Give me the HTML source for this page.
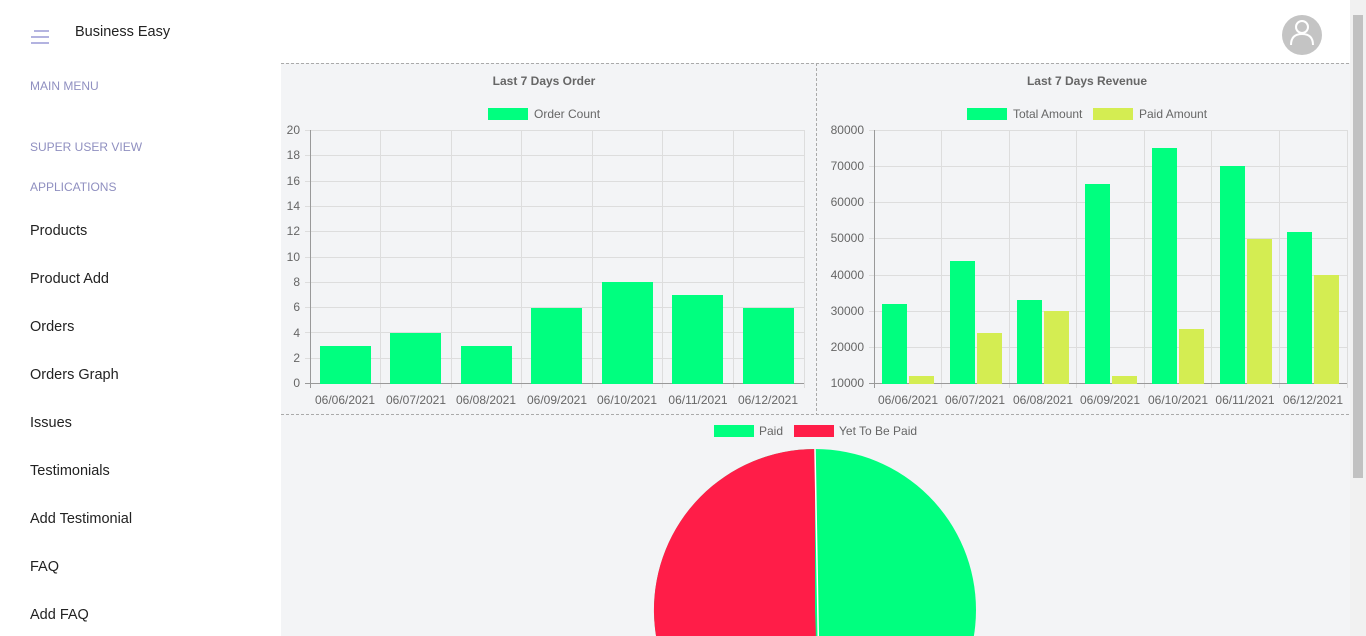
<!DOCTYPE html><html><head><style>
html,body{margin:0;width:1366px;height:636px;overflow:hidden}
body{font-family:"Liberation Sans",sans-serif;background:#fff;position:relative}
.hdr{position:absolute;left:0;top:0;width:1350px;height:63px;background:#fff}
.side{position:absolute;left:0;top:63px;width:281px;height:573px;background:#fff}
.h{position:absolute;left:30px;font-size:12px;color:#8f8fc0}
.i{position:absolute;left:30px;font-size:14.5px;color:#222}
.main{position:absolute;left:281px;top:63px;width:1069px;height:573px;background:#f3f4f6}
.sb{position:absolute;left:1350px;top:0;width:16px;height:636px;background:#f1f1f1}
</style></head><body>
<div class="hdr">
<svg style="position:absolute;left:30px;top:30px" width="20" height="16"><g stroke="#9a9ad6" stroke-width="1.5"><line x1="4" y1="1" x2="19" y2="1"/><line x1="1" y1="7" x2="19" y2="7"/><line x1="1" y1="13" x2="19" y2="13"/></g></svg>
<div style="position:absolute;left:75px;top:24px;font-size:14.5px;color:#222">Business Easy</div>
<svg style="position:absolute;left:1282px;top:15px" width="40" height="40"><circle cx="20" cy="20" r="20" fill="#c4c4c4"/><circle cx="20" cy="12" r="6" fill="none" stroke="#fff" stroke-width="2"/><path d="M9 30 Q9 19 20 19 Q31 19 31 30" fill="none" stroke="#fff" stroke-width="2"/></svg>
</div>
<div class="side">
<div class="h" style="top:16px">MAIN MENU</div>
<div class="h" style="top:77px">SUPER USER VIEW</div>
<div class="h" style="top:117px">APPLICATIONS</div>
<div class="i" style="top:160px">Products</div>
<div class="i" style="top:208px">Product Add</div>
<div class="i" style="top:256px">Orders</div>
<div class="i" style="top:304px">Orders Graph</div>
<div class="i" style="top:352px">Issues</div>
<div class="i" style="top:400px">Testimonials</div>
<div class="i" style="top:448px">Add Testimonial</div>
<div class="i" style="top:496px">FAQ</div>
<div class="i" style="top:544px">Add FAQ</div>
</div>
<div class="main"></div>
<svg style="position:absolute;left:0;top:0;overflow:hidden" width="1350" height="636" font-family="Liberation Sans, sans-serif" font-size="12" fill="#666">
<g stroke="#aaa" stroke-dasharray="3,2"><line x1="281" y1="63.5" x2="1350" y2="63.5"/><line x1="816.5" y1="63" x2="816.5" y2="414"/><line x1="281" y1="414.5" x2="1350" y2="414.5"/></g>
<text x="544" y="85" text-anchor="middle" font-weight="bold">Last 7 Days Order</text>
<rect x="488" y="108" width="40" height="12" fill="#00ff7f"/><text x="534" y="118">Order Count</text>
<g stroke="#ddd"><line x1="305" y1="130.5" x2="804" y2="130.5"/><line x1="305" y1="155.5" x2="804" y2="155.5"/><line x1="305" y1="181.5" x2="804" y2="181.5"/><line x1="305" y1="206.5" x2="804" y2="206.5"/><line x1="305" y1="231.5" x2="804" y2="231.5"/><line x1="305" y1="257.5" x2="804" y2="257.5"/><line x1="305" y1="282.5" x2="804" y2="282.5"/><line x1="305" y1="307.5" x2="804" y2="307.5"/><line x1="305" y1="332.5" x2="804" y2="332.5"/><line x1="305" y1="358.5" x2="804" y2="358.5"/>
<line x1="380.5" y1="130" x2="380.5" y2="388"/><line x1="451.5" y1="130" x2="451.5" y2="388"/><line x1="521.5" y1="130" x2="521.5" y2="388"/><line x1="592.5" y1="130" x2="592.5" y2="388"/><line x1="662.5" y1="130" x2="662.5" y2="388"/><line x1="733.5" y1="130" x2="733.5" y2="388"/><line x1="804.5" y1="130" x2="804.5" y2="388"/></g>
<g stroke="#999"><line x1="310.5" y1="130" x2="310.5" y2="388"/><line x1="305" y1="383.5" x2="804" y2="383.5"/></g>
<g text-anchor="end"><text x="300" y="134">20</text><text x="300" y="159">18</text><text x="300" y="185">16</text><text x="300" y="210">14</text><text x="300" y="235">12</text><text x="300" y="261">10</text><text x="300" y="286">8</text><text x="300" y="311">6</text><text x="300" y="337">4</text><text x="300" y="362">2</text><text x="300" y="387">0</text></g>
<g fill="#00ff7f"><rect x="320" y="346" width="51" height="38"/><rect x="390" y="333" width="51" height="51"/><rect x="461" y="346" width="51" height="38"/><rect x="531" y="308" width="51" height="76"/><rect x="602" y="282" width="51" height="102"/><rect x="672" y="295" width="51" height="89"/><rect x="743" y="308" width="51" height="76"/></g>
<g text-anchor="middle"><text x="345" y="404">06/06/2021</text><text x="416" y="404">06/07/2021</text><text x="486" y="404">06/08/2021</text><text x="557" y="404">06/09/2021</text><text x="627" y="404">06/10/2021</text><text x="698" y="404">06/11/2021</text><text x="768" y="404">06/12/2021</text></g>

<text x="1087" y="85" text-anchor="middle" font-weight="bold">Last 7 Days Revenue</text>
<rect x="967" y="108" width="40" height="12" fill="#00ff7f"/><text x="1013" y="118">Total Amount</text>
<rect x="1093" y="108" width="40" height="12" fill="#d4ed52"/><text x="1139" y="118">Paid Amount</text>
<g stroke="#ddd"><line x1="869" y1="130.5" x2="1347" y2="130.5"/><line x1="869" y1="166.5" x2="1347" y2="166.5"/><line x1="869" y1="202.5" x2="1347" y2="202.5"/><line x1="869" y1="238.5" x2="1347" y2="238.5"/><line x1="869" y1="275.5" x2="1347" y2="275.5"/><line x1="869" y1="311.5" x2="1347" y2="311.5"/><line x1="869" y1="347.5" x2="1347" y2="347.5"/>
<line x1="941.5" y1="130" x2="941.5" y2="388"/><line x1="1009.5" y1="130" x2="1009.5" y2="388"/><line x1="1076.5" y1="130" x2="1076.5" y2="388"/><line x1="1144.5" y1="130" x2="1144.5" y2="388"/><line x1="1211.5" y1="130" x2="1211.5" y2="388"/><line x1="1279.5" y1="130" x2="1279.5" y2="388"/><line x1="1347.5" y1="130" x2="1347.5" y2="388"/></g>
<g stroke="#999"><line x1="874.5" y1="130" x2="874.5" y2="388"/><line x1="869" y1="383.5" x2="1347" y2="383.5"/></g>
<g text-anchor="end"><text x="864" y="134">80000</text><text x="864" y="170">70000</text><text x="864" y="206">60000</text><text x="864" y="242">50000</text><text x="864" y="279">40000</text><text x="864" y="315">30000</text><text x="864" y="351">20000</text><text x="864" y="387">10000</text></g>
<g fill="#00ff7f"><rect x="882" y="304" width="25" height="80"/><rect x="950" y="261" width="25" height="123"/><rect x="1017" y="300" width="25" height="84"/><rect x="1085" y="184" width="25" height="200"/><rect x="1152" y="148" width="25" height="236"/><rect x="1220" y="166" width="25" height="218"/><rect x="1287" y="232" width="25" height="152"/></g>
<g fill="#d4ed52"><rect x="909" y="376" width="25" height="8"/><rect x="977" y="333" width="25" height="51"/><rect x="1044" y="311" width="25" height="73"/><rect x="1112" y="376" width="25" height="8"/><rect x="1179" y="329" width="25" height="55"/><rect x="1247" y="239" width="25" height="145"/><rect x="1314" y="275" width="25" height="109"/></g>
<g text-anchor="middle"><text x="908" y="404">06/06/2021</text><text x="975" y="404">06/07/2021</text><text x="1043" y="404">06/08/2021</text><text x="1110" y="404">06/09/2021</text><text x="1178" y="404">06/10/2021</text><text x="1245" y="404">06/11/2021</text><text x="1313" y="404">06/12/2021</text></g>

<rect x="714" y="425" width="40" height="12" fill="#00ff7f"/><text x="759" y="435">Paid</text>
<rect x="794" y="425" width="40" height="12" fill="#ff1d48"/><text x="839" y="435">Yet To Be Paid</text>
<circle cx="815" cy="610" r="161" fill="#00ff7f"/>
<path d="M815 610 L815 449 A161 161 0 1 0 820.6 770.9 Z" fill="#ff1d48"/>
<line x1="815" y1="449" x2="820.6" y2="770.9" stroke="#fff" stroke-width="1.5"/>
</svg>
<div class="sb"><div style="position:absolute;left:3px;top:15px;width:10px;height:463px;background:#c1c1c1"></div></div>
</body></html>
